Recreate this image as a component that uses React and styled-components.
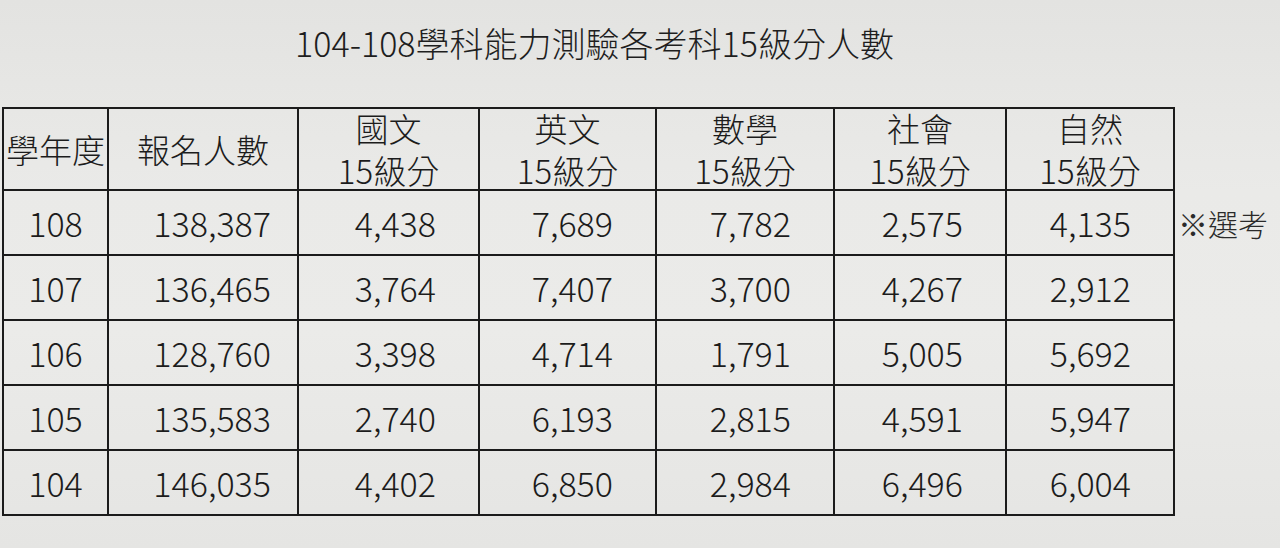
import React from 'react';
import { styled, createGlobalStyle } from 'styled-components';

const GlobalStyle = createGlobalStyle`
    html, body {
        margin: 0;
        padding: 0;
    }

    body {
        background: #e8e8e6;
        font-family: "Noto Sans CJK TC", "Noto Sans", sans-serif;
        color: #1c1c1c;
    }
`;

const Paper = styled.div`
    width: 1280px;
    height: 548px;
    overflow: hidden;
    box-sizing: border-box;
    padding: 21px 0 0 2px;
    background: linear-gradient(180deg, #e3e3e1 0%, #eaeae8 35%, #ebebe9 60%, #e5e5e3 100%);
`;

const Title = styled.h1`
    margin: 0;
    width: 1171px;
    padding-left: 14px;
    box-sizing: border-box;
    text-align: center;
    font-size: 34px;
    font-weight: 300;
    line-height: 44px;
    color: #1e1e1e;
`;

const Table = styled.table`
    margin-top: 42px;
    width: 1278px;
    border-collapse: collapse;
    table-layout: fixed;
`;

const HeadRow = styled.tr`
    height: 80px;
`;

const Row = styled.tr`
    height: 65px;
`;

const HeadCell = styled.th`
    border: 2px solid #1b1b1b;
    padding: 0;
    font-size: 33px;
    font-weight: 300;
    line-height: 40px;
    text-align: center;
    white-space: nowrap;
    vertical-align: middle;
`;

const HeadStack = styled.div`
    display: flex;
    flex-direction: column;
    align-items: center;
    gap: 4px;
    line-height: 38px;
`;

const Cell = styled.td`
    border: 2px solid #1b1b1b;
    padding: 0 ${(p) => p.$pad || 0}px 0 0;
    font-size: 34px;
    font-weight: 300;
    line-height: 44px;
    text-align: ${(p) => p.$align || 'right'};
    white-space: nowrap;
    vertical-align: middle;
`;

const NoteCell = styled.td`
    border: none;
    padding: 0 0 0 3px;
    font-size: 30px;
    font-weight: 300;
    line-height: 40px;
    color: #2a2a2a;
    white-space: nowrap;
    vertical-align: middle;
`;

const widths = [105, 190, 181, 177, 178, 172, 168, 107];

const subjects = ['國文', '英文', '數學', '社會', '自然'];

const rows = [
    ['108', '138,387', '4,438', '7,689', '7,782', '2,575', '4,135'],
    ['107', '136,465', '3,764', '7,407', '3,700', '4,267', '2,912'],
    ['106', '128,760', '3,398', '4,714', '1,791', '5,005', '5,692'],
    ['105', '135,583', '2,740', '6,193', '2,815', '4,591', '5,947'],
    ['104', '146,035', '4,402', '6,850', '2,984', '6,496', '6,004'],
];

export default function App() {
    return (
        <>
            <GlobalStyle />
            <Paper>
                <Title>104-108學科能力測驗各考科15級分人數</Title>
                <Table>
                    <colgroup>
                        {widths.map((w, i) => (
                            <col key={i} style={{ width: w }} />
                        ))}
                    </colgroup>
                    <thead>
                        <HeadRow>
                            <HeadCell>學年度</HeadCell>
                            <HeadCell>報名人數</HeadCell>
                            {subjects.map((s) => (
                                <HeadCell key={s}>
                                    <HeadStack>
                                        <span>{s}</span>
                                        <span>15級分</span>
                                    </HeadStack>
                                </HeadCell>
                            ))}
                            <NoteCell />
                        </HeadRow>
                    </thead>
                    <tbody>
                        {rows.map((r, i) => (
                            <Row key={r[0]}>
                                <Cell $align="center">{r[0]}</Cell>
                                <Cell $pad={26}>{r[1]}</Cell>
                                {r.slice(2).map((v, j) => (
                                    <Cell key={j} $pad={42}>
                                        {v}
                                    </Cell>
                                ))}
                                <NoteCell>{i === 0 ? '※選考' : ''}</NoteCell>
                            </Row>
                        ))}
                    </tbody>
                </Table>
            </Paper>
        </>
    );
}
